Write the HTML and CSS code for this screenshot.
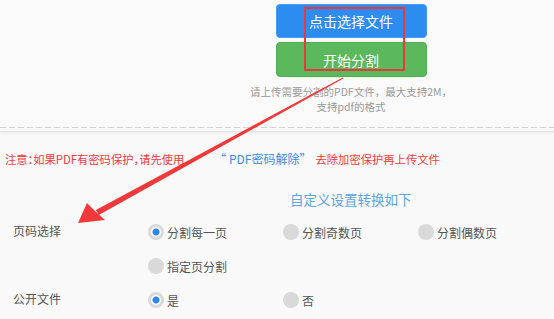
FILE: index.html
```html
<!DOCTYPE html>
<html lang="zh-CN">
<head>
  <meta charset="UTF-8">
  <meta name="viewport" content="width=device-width, initial-scale=1.0">
  <title>PDF分割</title>
  <link rel="stylesheet" href="styles.css">
</head>
<body>
  <div class="page">
    <section class="upload">
      <div class="upload-box">
        <button class="btn btn-blue">点击选择文件</button>
        <button class="btn btn-green">开始分割</button>
        <p class="tip">请上传需要分割的PDF文件，最大支持2M，<br>支持pdf的格式</p>
      </div>
      <div class="dash"></div>
    </section>

    <p class="notice">注意：如果PDF有密码保护，请先使用<a class="notice-link">“ PDF密码解除”</a>去除加密保护再上传文件</p>

    <h3 class="settings-title">自定义设置转换如下</h3>

    <div class="form">
      <div class="form-row">
        <span class="form-label">页码选择</span>
        <div class="options">
          <label class="radio checked"><span class="dot"></span>分割每一页</label>
          <label class="radio"><span class="dot"></span>分割奇数页</label>
          <label class="radio"><span class="dot"></span>分割偶数页</label>
          <label class="radio"><span class="dot"></span>指定页分割</label>
        </div>
      </div>
      <div class="form-row">
        <span class="form-label">公开文件</span>
        <div class="options">
          <label class="radio checked"><span class="dot"></span>是</label>
          <label class="radio"><span class="dot"></span>否</label>
        </div>
      </div>
    </div>

    <!-- annotation layer -->
    <div class="highlight"></div>
    <svg class="arrow" width="554" height="319" viewBox="0 0 554 319">
      <polygon points="343.3,78.5 342.7,77.5 95.8,209.9 98.8,215.1" fill="#f0393b"/>
      <polygon points="78,223 87,203 96,212 105,220" fill="#f0393b"/>
    </svg>
  </div>
</body>
</html>
```

FILE: styles.css
```css
body {
  margin: 0;
  background: #f9f9f9;
  font-family: "Noto Sans CJK SC", "Noto Sans", sans-serif;
  color: #555;
}
.page {
  position: relative;
  width: 554px;
  height: 319px;
  overflow: hidden;
}
.upload {
  height: 132px;
  background: #fafafa;
  border-bottom: 1px solid #e4e4e4;
  box-shadow: 0 1px 3px rgba(0,0,0,0.07);
  padding-top: 4px;
  box-sizing: border-box;
}
.upload-box {
  width: 210px;
  margin-left: 246px;
  display: flex;
  flex-direction: column;
  align-items: center;
}
.btn {
  width: 151px;
  border: none;
  border-radius: 4px;
  color: #fff;
  font-family: inherit;
  font-size: 14px;
  padding: 0;
  cursor: pointer;
}
.btn-blue {
  height: 34px;
  background: #2d8cf0;
  border: 1px solid #4a9cf2;
}
.btn-green {
  height: 35px;
  margin-top: 4px;
  background: #5cb85c;
  border: 1px solid #53ae53;
}
.tip {
  margin: 7px 0 0;
  font-size: 10.5px;
  line-height: 15px;
  color: #999;
  text-align: center;
  white-space: nowrap;
}
.dash {
  height: 1px;
  margin-top: 13px;
  background: repeating-linear-gradient(90deg, #d2d2d2 0 6px, transparent 6px 9px);
}
.notice {
  margin: 17px 0 0 5px;
  font-size: 11.3px;
  line-height: 20px;
  color: #f53a3a;
  white-space: nowrap;
  font-feature-settings: "halt";
}
.notice-link {
  color: #3b8de6;
  font-size: 12px;
  margin: 0 10px 0 36px;
}
.settings-title {
  margin: 20px 0 0 290px;
  font-size: 13.5px;
  line-height: 20px;
  font-weight: normal;
  color: #5ca6e2;
}
.form {
  margin-top: 6px;
}
.form-row {
  display: flex;
  align-items: flex-start;
}
.form-label {
  width: 135px;
  padding-left: 13px;
  height: 34px;
  line-height: 32px;
  font-size: 12px;
  color: #555;
  flex-shrink: 0;
}
.options {
  display: flex;
  flex-wrap: wrap;
  width: 405px;
}
.radio {
  width: 135px;
  height: 34px;
  display: flex;
  align-items: center;
  gap: 3px;
  font-size: 12px;
  color: #555;
}
.dot {
  width: 16px;
  height: 16px;
  border-radius: 50%;
  background: #d9d9d9;
  box-sizing: border-box;
  flex-shrink: 0;
}
.radio.checked .dot {
  border: 3px solid #dadada;
  background: radial-gradient(circle, #2b88ee 0 3.3px, #fff 3.8px);
}
.highlight {
  position: absolute;
  left: 304px;
  top: 7px;
  width: 101px;
  height: 64px;
  border: 2px solid #e8393d;
  box-sizing: border-box;
}
.arrow {
  position: absolute;
  left: 0;
  top: 0;
}
```
